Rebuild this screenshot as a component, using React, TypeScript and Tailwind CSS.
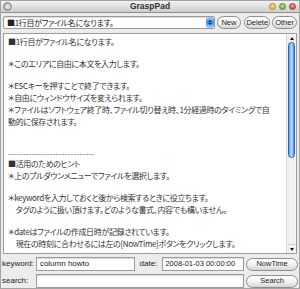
import React from 'react';

// Body text of the note, one entry per visual line (wrapping is fixed as in the shot).
const lines: string[] = [
  '■1行目がファイル名になります。',
  '',
  '＊このエリアに自由に本文を入力します。',
  '',
  '＊ESCキーを押すことで終了できます。',
  '＊自由にウィンドウサイズを変えられます。',
  '＊ファイルはソフトウェア終了時、ファイル切り替え時、1分経過時のタイミングで自',
  '動的に保存されます。',
  '',
  '',
  '-----------------------------',
  '■活用のためのヒント',
  '＊上のプルダウンメニューでファイルを選択します。',
  '',
  '＊keywordを入力しておくと後から検索するときに役立ちます。',
  '　タグのように扱い頂けます。どのような書式、内容でも構いません。',
  '',
  '＊dateはファイルの作成日時が記録されています。',
  '　現在の時刻に合わせるには左の[NowTime]ボタンをクリックします。',
];

const jp = "font-['Noto_Sans_CJK_JP',sans-serif] [font-feature-settings:'palt'] tracking-[-0.35px]";
const ui = "font-['Liberation_Sans','Noto_Sans_CJK_JP',sans-serif]";

function PillButton({ label, className }: { label: string; className: string }) {
  return (
    <button
      className={`${ui} ${className} flex h-[13px] items-center justify-center rounded-full border border-[#8e8e8e] bg-gradient-to-b from-white via-[#f2f2f2] to-[#d6d6d6] text-[7.5px] leading-none text-[#222]`}
    >
      {label}
    </button>
  );
}

export default function App() {
  return (
    <div className="flex h-[289px] w-[300px] flex-col overflow-hidden border border-[#a3a3a3] bg-[#ececec]">
      {/* title bar */}
      <div className="grid h-[12px] shrink-0 grid-cols-[1fr_auto_1fr] items-center border-b border-[#8f8f8f] bg-gradient-to-b from-[#f3f3f3] to-[#cdcdcd] px-[2px]">
        <svg width="9" height="9" viewBox="0 0 9 9">
          <circle cx="4.5" cy="4.5" r="3.6" fill="#e6e6e6" stroke="#7d7d7d" strokeWidth="1.2" />
          <circle cx="4.5" cy="4.5" r="1.6" fill="#f7f7f7" stroke="#a6a6a6" strokeWidth="0.6" />
        </svg>
        <div className={`${ui} text-[8.5px] font-bold leading-none text-[#333]`}>GraspPad</div>
        <div className="flex items-center justify-end gap-[3px] pr-[1px]">
          <span className="h-[7px] w-[7px] rounded-full border border-[#b08a2a] bg-[radial-gradient(circle_at_50%_30%,#fbe08a,#e0a82c)]" />
          <span className="h-[7px] w-[7px] rounded-full border border-[#4f8a2c] bg-[radial-gradient(circle_at_50%_30%,#b8e48c,#5ea736)]" />
          <span className="h-[7px] w-[7px] rounded-full border border-[#9a3b36] bg-[radial-gradient(circle_at_50%_30%,#f2a19a,#c9433c)]" />
        </div>
      </div>

      {/* toolbar */}
      <div className="mt-[3px] flex h-[13px] shrink-0 items-center px-[2px]">
        <div className="flex h-[13px] w-[213px] items-center justify-between rounded-[2px] border border-[#9a9a9a] bg-white pl-[3px] shadow-[inset_0_1px_1px_rgba(0,0,0,0.15)]">
          <span className={`${jp} text-[8px] leading-none text-[#222]`}>■1行目がファイル名になります。</span>
          <span className="flex h-[11px] w-[8px] flex-col items-center justify-center gap-[1px] rounded-[2px] bg-gradient-to-b from-[#9fd0ff] via-[#3d8ef0] to-[#a9d7ff]">
            <span className="h-0 w-0 border-x-[2px] border-b-[2px] border-x-transparent border-b-[#102a55]" />
            <span className="h-0 w-0 border-x-[2px] border-t-[2px] border-x-transparent border-t-[#102a55]" />
          </span>
        </div>
        <PillButton label="New" className="ml-[2px] w-[25px]" />
        <PillButton label="Delete" className="ml-[3px] w-[26px]" />
        <PillButton label="Other" className="ml-[2px] w-[25px]" />
      </div>

      {/* note body */}
      <div className="mx-[2px] mt-[4px] flex min-h-0 flex-1 border border-[#9c9c9c] bg-white">
        <div className="flex-1 overflow-hidden pl-[4px] pt-[2px]">
          {lines.map((t, i) => {
            const h = t === '' ? 'h-[10px]' : t.startsWith('---') ? 'h-[10px] text-[#555] tracking-[0.2px]' : 'h-[12px] text-[#333]';
            return (
              <div key={i} className={`${jp} ${h} whitespace-nowrap text-[8px] leading-[12px]`}>
                {t}
              </div>
            );
          })}
        </div>
        {/* scrollbar */}
        <div className="flex w-[10px] flex-col border-l border-[#d6d6d6] bg-[repeating-linear-gradient(90deg,#f6f6f6_0px,#ebebeb_2px,#f8f8f8_4px)]">
          <div className="flex h-[8px] items-center justify-center">
            <span className="h-0 w-0 border-x-[2px] border-b-[3px] border-x-transparent border-b-[#111]" />
          </div>
          <div className="mx-[1px] h-[116px] rounded-full border border-[#2d5fa8] bg-gradient-to-r from-[#5d9df0] via-[#b8dbff] to-[#4f8ee6]" />
          <div className="flex-1" />
          <div className="flex h-[9px] items-center justify-center border-t border-[#d6d6d6]">
            <span className="h-0 w-0 border-x-[2px] border-t-[3px] border-x-transparent border-t-[#111]" />
          </div>
        </div>
      </div>

      {/* keyword / date row */}
      <div className="mt-[3px] flex h-[14px] shrink-0 items-center px-[1px]">
        <span className={`${ui} w-[34px] text-[8px] leading-none text-[#222]`}>keyword:</span>
        <div className={`${ui} flex h-[14px] w-[99px] items-center border border-[#9c9c9c] bg-white pl-[3px] text-[8px] text-[#222] shadow-[inset_0_1px_1px_rgba(0,0,0,0.15)]`}>
          column howto
        </div>
        <span className={`${ui} ml-[5px] w-[23px] text-[8px] leading-none text-[#222]`}>date:</span>
        <div className={`${ui} flex h-[14px] w-[82px] items-center whitespace-nowrap border border-[#9c9c9c] bg-white pl-[2px] text-[7.5px] text-[#222] shadow-[inset_0_1px_1px_rgba(0,0,0,0.15)]`}>
          2008-01-03 00:00:00
        </div>
        <PillButton label="NowTime" className="ml-[2px] w-[52px]" />
      </div>

      {/* search row */}
      <div className="mt-[3px] flex h-[14px] shrink-0 items-center px-[1px]">
        <span className={`${ui} w-[34px] text-[8px] leading-none text-[#222]`}>search:</span>
        <div className="h-[14px] w-[209px] border border-[#9c9c9c] bg-white shadow-[inset_0_1px_1px_rgba(0,0,0,0.15)]" />
        <PillButton label="Search" className="ml-[2px] w-[52px]" />
      </div>
    </div>
  );
}
